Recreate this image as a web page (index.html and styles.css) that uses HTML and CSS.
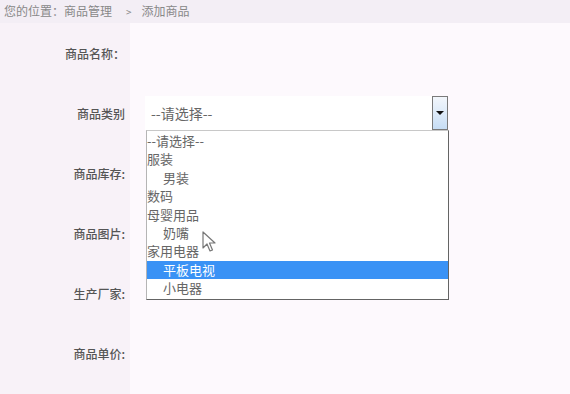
FILE: index.html
```html
<!DOCTYPE html>
<html lang="zh-CN">
<head>
    <meta charset="UTF-8">
    <title>添加商品</title>
    <link rel="stylesheet" href="styles.css">
</head>
<body>
    <div class="crumb">您的位置：商品管理<span class="sep">&gt;</span>添加商品</div>
    <div class="form">
        <div class="row"><label>商品名称：</label></div>
        <div class="row">
            <label>商品类别</label>
            <div class="select">
                <span class="value">--请选择--</span>
                <span class="btn"><i class="arrow"></i></span>
                <ul class="list">
                    <li>--请选择--</li>
                    <li>服装</li>
                    <li class="sub">男装</li>
                    <li>数码</li>
                    <li>母婴用品</li>
                    <li class="sub">奶嘴</li>
                    <li>家用电器</li>
                    <li class="sub current">平板电视</li>
                    <li class="sub">小电器</li>
                </ul>
                <svg class="cursor" width="14" height="22" viewBox="0 0 14 22">
                    <path d="M1 1 L1 17 L5 13 L8 20 L10.5 19 L7.5 12 L13 12 Z" fill="#fff" stroke="#777" stroke-width="1.2" stroke-linejoin="round"/>
                </svg>
            </div>
        </div>
        <div class="row"><label>商品库存:</label></div>
        <div class="row"><label>商品图片:</label></div>
        <div class="row"><label>生产厂家:</label></div>
        <div class="row"><label>商品单价:</label></div>
    </div>
</body>
</html>
```

FILE: styles.css
```css
* {
    padding: 0;
    margin: 0;
    box-sizing: border-box;
}
body {
    width: 570px;
    height: 394px;
    overflow: hidden;
    background: linear-gradient(to right, #f8f2f8 0, #f8f2f8 130px, #fdf9fd 130px);
    font-family: "Noto Sans CJK SC", "Noto Sans", sans-serif;
    font-size: 12px;
    color: #555;
}
.crumb {
    height: 23px;
    line-height: 22px;
    padding-left: 4px;
    background: #f3eef5;
    color: #888;
}
.sep {
    margin: 0 10px 0 14px;
    font-size: 10px;
}
.row {
    display: flex;
    align-items: center;
    height: 60px;
}
.row label {
    width: 125px;
    text-align: right;
    color: #555;
    font-weight: 500;
}
.select {
    position: relative;
    display: flex;
    align-items: center;
    width: 303px;
    height: 34px;
    margin-left: 20px;
    padding-left: 6px;
    background: #fff;
    font-size: 14px;
    color: #666;
}
.value {
    flex: 1;
}
.btn {
    display: flex;
    align-items: center;
    justify-content: center;
    width: 16px;
    height: 34px;
    border: 1px solid #7a7a7a;
    background: linear-gradient(#f2f6fb, #d9e8f8 60%, #c6ddf5);
}
.arrow {
    border-left: 4px solid transparent;
    border-right: 4px solid transparent;
    border-top: 4px solid #111;
}
.list {
    position: absolute;
    top: 34px;
    left: 1px;
    width: 303px;
    padding: 1px 0;
    list-style: none;
    background: #fff;
    border: 1px solid #646464;
    border-left-color: #b5b5b5;
    border-top-color: #c8c8c8;
    font-size: 13px;
    z-index: 2;
}
.list li {
    height: 18.4px;
    line-height: 18px;
    color: #666;
}
.list .sub {
    padding-left: 16px;
}
.list .current {
    background: #3a92f5;
    color: #fff;
}
.cursor {
    position: absolute;
    left: 57px;
    top: 135px;
    z-index: 3;
}
```
